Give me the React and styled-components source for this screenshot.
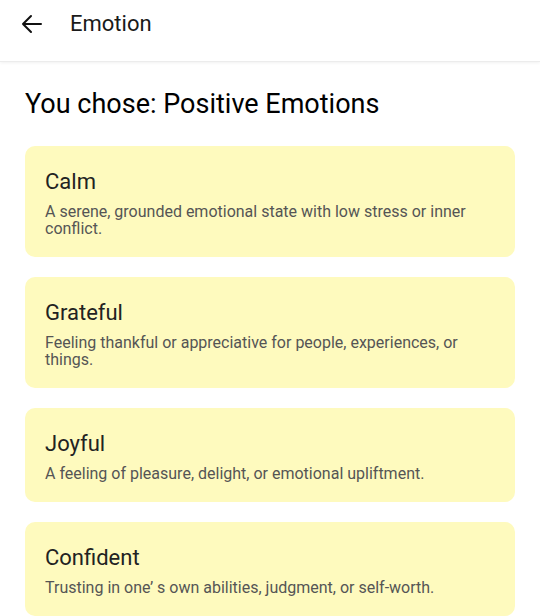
import React from 'react'
import styled, { createGlobalStyle } from 'styled-components'

const GlobalStyle = createGlobalStyle`
  body {
    margin: 0;
    background: #fff;
    font-family: Roboto, "Noto Sans", sans-serif;
  }
`

const Header = styled.header`
  height: 62px;
  box-sizing: border-box;
  display: flex;
  align-items: flex-start;
  padding: 12px 0 0 20px;
  gap: 26px;
  border-bottom: 1px solid #ececec;
  box-shadow: 0 1px 3px rgba(0, 0, 0, 0.06);
`

const BackButton = styled.button`
  background: transparent;
  border: none;
  padding: 0;
  display: flex;
  color: #111;
  cursor: pointer;
`

const HeaderTitle = styled.h1`
  margin: 0;
  font-size: 22px;
  font-weight: 400;
  color: #1a1a1a;
  line-height: 24px;
`

const Main = styled.main`
  padding: 25px 25px 0;
`

const PageTitle = styled.h2`
  margin: 0 0 25px;
  font-size: 27px;
  font-weight: 400;
  color: #000;
  line-height: 34px;
`

const CardList = styled.div`
  display: flex;
  flex-direction: column;
  gap: 20px;
`

const Card = styled.div`
  background: #fefabe;
  border-radius: 10px;
  padding: 23px 20px 20px;
`

const CardTitle = styled.div`
  font-size: 22px;
  color: #222;
  line-height: 26px;
  margin-bottom: 8px;
`

const CardText = styled.div`
  font-size: 16px;
  color: #555;
  line-height: 17px;
`

const emotions = [
  { name: 'Calm', desc: 'A serene, grounded emotional state with low stress or inner conflict.' },
  { name: 'Grateful', desc: 'Feeling thankful or appreciative for people, experiences, or things.' },
  { name: 'Joyful', desc: 'A feeling of pleasure, delight, or emotional upliftment.' },
  { name: 'Confident', desc: 'Trusting in one\u2019 s own abilities, judgment, or self-worth.' },
]

export default function App() {
  return (
    <>
      <GlobalStyle />
      <Header>
        <BackButton>
          <svg width="24" height="24" viewBox="0 0 24 24" fill="none" stroke="currentColor" strokeWidth="2" strokeLinecap="round" strokeLinejoin="round">
            <path d="M21 12H3M11 4l-8 8 8 8" />
          </svg>
        </BackButton>
        <HeaderTitle>Emotion</HeaderTitle>
      </Header>
      <Main>
        <PageTitle>You chose: Positive Emotions</PageTitle>
        <CardList>
          {emotions.map((e) => (
            <Card key={e.name}>
              <CardTitle>{e.name}</CardTitle>
              <CardText>{e.desc}</CardText>
            </Card>
          ))}
        </CardList>
      </Main>
    </>
  )
}
